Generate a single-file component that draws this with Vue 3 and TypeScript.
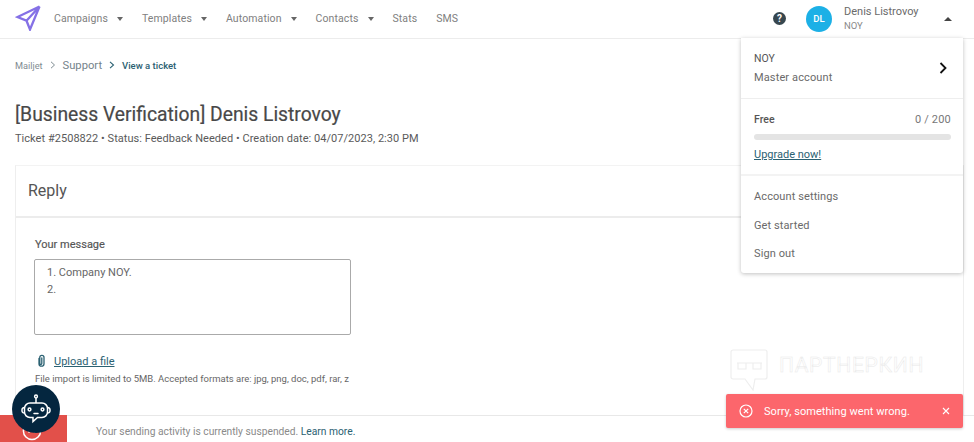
<script setup lang="ts">
const navItems: { label: string; caret: boolean }[] = [
  { label: 'Campaigns', caret: true },
  { label: 'Templates', caret: true },
  { label: 'Automation', caret: true },
  { label: 'Contacts', caret: true },
  { label: 'Stats', caret: false },
  { label: 'SMS', caret: false },
]
</script>

<template>
  <div class="page">
    <header class="topbar">
      <svg class="logo" width="26" height="26" viewBox="0 0 26 26">
        <path d="M24.500 1.500 2.500 12l9 3.700L15 24.500 24.500 1.500 11.500 15.700" fill="none" stroke="#8571e6" stroke-width="2.300" stroke-linejoin="miter" />
      </svg>
      <nav class="nav">
        <a v-for="item in navItems" :key="item.label" class="nav-item">
          {{ item.label }}<i v-if="item.caret" class="caret"></i>
        </a>
      </nav>
      <div class="user">
        <span class="help">?</span>
        <span class="avatar">DL</span>
        <div class="user-text">
          <span class="user-name">Denis Listrovoy</span>
          <span class="user-org">NOY</span>
        </div>
        <i class="caret-up"></i>
      </div>
    </header>

    <main class="content">
      <div class="crumbs">
        <span class="crumb-a">Mailjet</span>
        <svg class="chev" width="6" height="8" viewBox="0 0 6 8"><path d="M1 .8 4.500 4 1 7.200" fill="none" stroke="#7f8c92" stroke-width="1" /></svg>
        <span class="crumb-b">Support</span>
        <svg class="chev" width="6" height="8" viewBox="0 0 6 8"><path d="M1 .8 4.500 4 1 7.200" fill="none" stroke="#2b6172" stroke-width="1.100" /></svg>
        <span class="crumb-c">View a ticket</span>
      </div>
      <h1 class="title">[Business Verification] Denis Listrovoy</h1>
      <p class="meta">Ticket #2508822 • Status: Feedback Needed • Creation date: 04/07/2023, 2:30 PM</p>

      <section class="card">
        <h2 class="card-head">Reply</h2>
        <div class="card-body">
          <label class="field-label">Your message</label>
          <div class="textarea">
            <div>1. Company NOY.</div>
            <div>2.</div>
          </div>
          <div class="upload">
            <svg width="11" height="14" viewBox="0 0 11 14">
              <path d="M3 4.500v5.200a2.500 2.500 0 0 0 5 0V3.400a2.100 2.100 0 0 0-4.200 0v6a1 1 0 0 0 2 0V4" fill="none" stroke="#2b6172" stroke-width="1.300" stroke-linecap="round" />
            </svg>
            <a class="upload-link">Upload a file</a>
          </div>
          <p class="hint">File import is limited to 5MB. Accepted formats are: jpg, png, doc, pdf, rar, z</p>
        </div>
      </section>
    </main>

    <aside class="menu">
      <div class="menu-account">
        <div>
          <div class="acc-name">NOY</div>
          <div class="acc-role">Master account</div>
        </div>
        <svg width="8" height="12" viewBox="0 0 8 12"><path d="M1.500 1 6.500 6l-5 5" fill="none" stroke="#111" stroke-width="1.800" /></svg>
      </div>
      <div class="menu-plan">
        <div class="plan-row"><span class="plan-name">Free</span><span class="plan-count">0 / 200</span></div>
        <div class="plan-bar"></div>
        <a class="plan-link">Upgrade now!</a>
      </div>
      <div class="menu-links">
        <a>Account settings</a>
        <a>Get started</a>
        <a>Sign out</a>
      </div>
    </aside>

    <footer class="bottom">
      <div class="bottom-red">
        <svg class="bottom-icon" width="20" height="20" viewBox="0 0 20 20">
          <circle cx="10" cy="10" r="8.600" fill="none" stroke="#fff" stroke-width="1.500" />
          <path d="M6.500 11.500 10 8l3.500 3.500" fill="none" stroke="#fff" stroke-width="1.500" />
        </svg>
      </div>
      <p class="bottom-text">Your sending activity is currently suspended. <a>Learn more.</a></p>
    </footer>

    <div class="bot">
      <svg width="34" height="34" viewBox="0 0 34 34" fill="none" stroke="#fff" stroke-width="1.500">
        <circle cx="17" cy="4.500" r="1.400" />
        <path d="M17 6v5" />
        <path d="M11 11h12a5.500 5.500 0 0 1 5.500 5.500v3.500a5.500 5.500 0 0 1-5.500 5.500h-4.500L14 29.500v-4h-3a5.500 5.500 0 0 1-5.500-5.500v-3.500A5.500 5.500 0 0 1 11 11Z" />
        <path d="M5.500 15.500a2.300 2.300 0 0 0-2.500 2.300v1a2.300 2.300 0 0 0 2.500 2.300M28.500 15.500a2.300 2.300 0 0 1 2.500 2.300v1a2.300 2.300 0 0 1-2.500 2.300" />
        <circle cx="10.500" cy="17.500" r="1.400" />
        <circle cx="23.500" cy="17.500" r="1.400" />
        <path d="M15 21.500h4" stroke-linecap="round" />
      </svg>
    </div>

    <div class="watermark" aria-hidden="true">
      <svg width="38" height="42" viewBox="0 0 38 42" fill="none" stroke="#eeeeee" stroke-width="1.200">
        <path d="M3 1h32a2 2 0 0 1 2 2v25a2 2 0 0 1-2 2H25l-2 11-8-11H3a2 2 0 0 1-2-2V3a2 2 0 0 1 2-2Z" />
        <path d="M7 14h25M8 14v6h8v-6M23 14v6h8v-6" />
      </svg>
      <span class="wm-text">ПАРТНЕРКИН</span>
    </div>

    <div class="toast">
      <svg width="14" height="14" viewBox="0 0 14 14" fill="none" stroke="#fff" stroke-width="1.200">
        <circle cx="7" cy="7" r="6" />
        <path d="M4.800 4.800l4.400 4.400M9.200 4.800l-4.400 4.400" />
      </svg>
      <span class="toast-text">Sorry, something went wrong.</span>
      <svg class="toast-x" width="8" height="8" viewBox="0 0 8 8" fill="none" stroke="#fff" stroke-width="1.100">
        <path d="M1 1l6 6M7 1 1 7" />
      </svg>
    </div>
  </div>
</template>

<style>
html, body { margin: 0; overflow: hidden; background: #fff; }
</style>

<style scoped>
.page {
  position: relative;
  width: 974px;
  height: 442px;
  overflow: hidden;
  background: #fff;
  font-family: Roboto, "Liberation Sans", sans-serif;
  color: #4a4a4a;
}
.topbar {
  display: flex;
  align-items: center;
  height: 38px;
  padding: 0 0 0 15px;
  border-bottom: 1px solid #ececec;
}
.logo { flex: none; margin-top: -2px; }
.nav { display: flex; align-items: center; margin-left: 13px; gap: 19px; margin-top: -1px; }
.nav-item {
  display: flex;
  align-items: center;
  font-size: 10.500px;
  letter-spacing: .1px;
  color: #808080;
}
.caret {
  width: 0; height: 0; margin-left: 9px;
  border-left: 3.500px solid transparent;
  border-right: 3.500px solid transparent;
  border-top: 4px solid #666;
}
.user { display: flex; align-items: center; margin-left: auto; padding-right: 22px; margin-top: -1px; }
.help {
  width: 13px; height: 13px; border-radius: 50%;
  background: #37474f; color: #fff;
  font-size: 10px; font-weight: 700; line-height: 13px; text-align: center;
}
.avatar {
  width: 26px; height: 26px; margin-left: 20px; border-radius: 50%;
  background: #1cb0e6; color: #fff;
  font-size: 9.500px; font-weight: 500; line-height: 26px; text-align: center;
}
.user-text { display: flex; flex-direction: column; margin-left: 12px; width: 100px; }
.user-name { font-size: 11px; line-height: 13px; color: #6a6a6a; }
.user-org { font-size: 9.500px; line-height: 13px; margin-top: 1px; color: #8a8a8a; }
.caret-up {
  width: 0; height: 0;
  border-left: 4px solid transparent;
  border-right: 4px solid transparent;
  border-bottom: 4px solid #444;
}
.content { padding: 0 10px 0 15px; }
.crumbs { display: flex; align-items: center; height: 16px; margin-top: 18px; }
.crumb-a { font-size: 9.200px; color: #7f8c92; }
.crumb-b { font-size: 11.200px; color: #74838a; }
.crumb-c { font-size: 9.500px; font-weight: 500; color: #2b6172; }
.chev { margin: 0 7px 0 7px; flex: none; }
.title {
  margin: 30px 0 0;
  font-size: 19.300px;
  line-height: 24px;
  font-weight: 400;
  color: #484848;
  -webkit-text-stroke: .2px #484848;
}
.meta {
  margin: 4px 0 0;
  font-size: 11px;
  line-height: 16px;
  letter-spacing: .04px;
  color: #5a5a5a;
}
.card {
  margin-top: 18px;
  background: #fff;
  border-left: 1px solid #eee;
  border-right: 1px solid #eee;
  border-top: 1px solid #f3f3f3;
  height: 300px;
}
.card-head {
  margin: 0;
  height: 50px;
  padding-left: 12px;
  border-bottom: 2px solid #ececec;
  font-size: 16px;
  font-weight: 400;
  line-height: 50px;
  color: #555;
}
.card-body { padding: 0 0 0 18px; }
.field-label {
  display: block;
  margin: 19px 0 0 1px;
  font-size: 11px;
  font-weight: 400;
  -webkit-text-stroke: .15px #555;
  line-height: 16px;
  color: #555;
}
.textarea {
  width: 317px;
  height: 76px;
  margin-top: 6px;
  box-sizing: border-box;
  padding: 5px 12px;
  border: 1px solid #aaa;
  border-radius: 2px;
  font-size: 11px;
  line-height: 16.500px;
  color: #666;
}
.upload { display: flex; align-items: center; gap: 7px; margin-top: 19px; height: 14px; padding-left: 2px; }
.upload-link { font-size: 11px; color: #2b6172; text-decoration: underline; }
.hint { margin: 4px 0 0 1px; font-size: 9.470px; line-height: 14px; color: #666; }
.menu {
  position: absolute;
  top: 38px;
  left: 741px;
  width: 222px;
  height: 235px;
  background: #fff;
  border-radius: 0 0 3px 3px;
  box-shadow: 0 1px 4px rgba(0, 0, 0, .25);
  display: flex;
  flex-direction: column;
  color: #666;
}
.menu-account {
  display: flex;
  align-items: center;
  justify-content: space-between;
  height: 60px;
  padding: 0 16px 0 13px;
  border-bottom: 1px solid #eee;
}
.acc-name { font-size: 10.500px; line-height: 14px; color: #555; }
.acc-role { font-size: 11px; line-height: 14px; margin-top: 5px; color: #6a6a6a; letter-spacing: .13px; }
.menu-plan {
  height: 75px;
  padding: 0 12px 0 13px;
  border-bottom: 2px solid #f3f3f3;
}
.plan-row { display: flex; justify-content: space-between; margin-top: 14px; line-height: 14px; }
.plan-name { font-size: 10.500px; font-weight: 500; color: #555; }
.plan-count { font-size: 11px; color: #777; letter-spacing: .2px; }
.plan-bar { height: 6px; margin-top: 7px; border-radius: 3px; background: #e4e4e4; }
.plan-link {
  display: block; margin-top: 8px;
  font-size: 11px; line-height: 14px; color: #2b6172; text-decoration: underline;
}
.menu-links { display: flex; flex-direction: column; padding: 7px 0 0 13px; }
.menu-links a { font-size: 11px; line-height: 28.500px; letter-spacing: .1px; color: #6a6a6a; }
.bottom {
  position: absolute;
  left: 0; right: 0; bottom: 0;
  height: 26px;
  background: #fff;
  border-top: 1px solid #e8e8e8;
  display: flex;
  align-items: flex-start;
}
.bottom-red {
  position: relative;
  width: 67px; height: 27px; margin-top: -1px;
  background: #e2504a;
  overflow: hidden;
  flex: none;
}
.bottom-icon { position: absolute; left: 22px; top: 6px; }
.bottom-text { margin: 9px 0 0 29px; font-size: 10.260px; line-height: 14px; color: #8a8a8a; }
.bottom-text a { color: #2b6172; }
.bot {
  position: absolute;
  left: 12px; top: 385px;
  width: 48px; height: 48px;
  border-radius: 50%;
  background: #04263f;
  display: flex;
  align-items: center;
  justify-content: center;
}
.watermark {
  position: absolute;
  left: 730px; top: 349px;
  display: flex;
  align-items: flex-start;
  gap: 11px;
}
.wm-text {
  margin-top: 3px;
  font-size: 21px;
  line-height: 26px;
  letter-spacing: .7px;
  color: #fff;
  -webkit-text-stroke: .5px #e9e9e9;
}
.toast {
  position: absolute;
  left: 726px; top: 394px;
  width: 237px; height: 34px;
  box-sizing: border-box;
  padding: 0 13px;
  display: flex;
  align-items: center;
  background: #fc666c;
  border-radius: 2px;
  box-shadow: 0 1px 3px rgba(0, 0, 0, .2);
}
.toast-text { margin-left: 11px; font-size: 11px; letter-spacing: .05px; color: #fff; }
.toast-x { margin-left: auto; }
</style>
